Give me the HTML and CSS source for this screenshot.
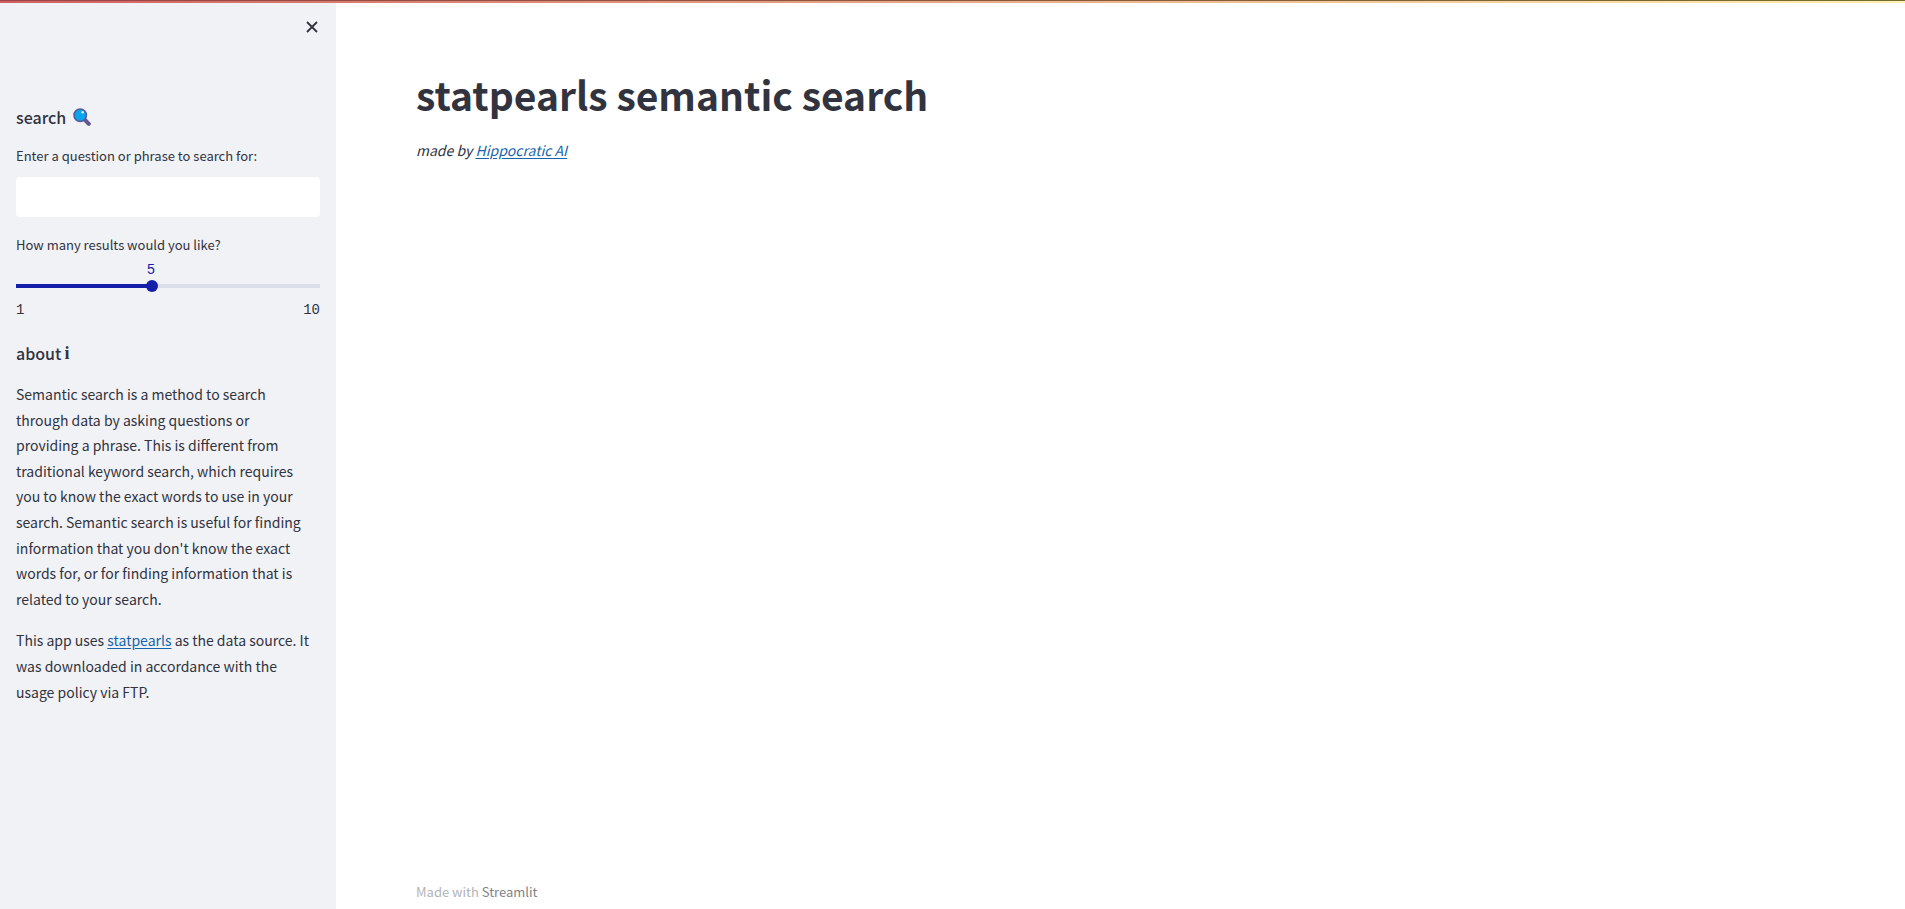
FILE: index.html
```
<!DOCTYPE html>
<html lang="en">
<head>
<meta charset="utf-8">
<meta name="viewport" content="width=device-width, initial-scale=1">
<title>statpearls semantic search</title>
<link rel="stylesheet" href="styles.css">
</head>
<body>
<div class="decoration"></div>
<div class="app">
  <aside class="sidebar">
    <button class="close" type="button" aria-label="Close sidebar">
      <svg viewBox="0 0 12 12" width="12" height="12" aria-hidden="true"><path d="M1 1 11 11M11 1 1 11" fill="none" stroke="currentColor" stroke-width="1.8"/></svg>
    </button>
    <h2 class="heading">search
      <svg class="lens" viewBox="0 0 18 18" width="18" height="18" aria-hidden="true">
        <path d="M11.5 11.5 15.8 15.8" stroke="#675593" stroke-width="4" stroke-linecap="round"/>
        <circle cx="7.2" cy="7.2" r="6.2" fill="#06a5ee" stroke="#50609d" stroke-width="1.6"/>
        <circle cx="9.7" cy="4.3" r="1.2" fill="#e8f7ff"/>
      </svg>
    </h2>
    <label class="label" for="query">Enter a question or phrase to search for:</label>
    <input class="query" id="query" type="text">
    <label class="label" for="count">How many results would you like?</label>
    <output class="value" for="count">5</output>
    <input class="slider" id="count" type="range" min="1" max="10" value="5">
    <div class="ticks"><span>1</span><span>10</span></div>
    <h2 class="heading heading-about">about <span class="info">i</span></h2>
    <p class="text">Semantic search is a method to search through data by asking questions or providing a phrase. This is different from traditional keyword search, which requires you to know the exact words to use in your search. Semantic search is useful for finding information that you don't know the exact words for, or for finding information that is related to your search.</p>
    <p class="text">This app uses <a href="#statpearls">statpearls</a> as the data source. It was downloaded in accordance with the usage policy via FTP.</p>
  </aside>
  <div class="page">
    <main>
      <h1 class="title">statpearls semantic search</h1>
      <p class="byline">made by <a href="#hippocratic">Hippocratic AI</a></p>
    </main>
    <footer class="footer">Made with <a href="#streamlit">Streamlit</a></footer>
  </div>
</div>
</body>
</html>
```
FILE: styles.css
```
* { box-sizing: border-box; }
body {
  margin: 0;
  font-family: "Source Sans Pro", "Noto Sans CJK SC", sans-serif;
  font-size: 16px;
  line-height: 160%;
  color: #31333f;
  background: #fff;
}
a { color: #1664ab; text-underline-offset: 2px; }
.decoration {
  position: fixed;
  inset: 0 0 auto;
  z-index: 2;
  height: 3px;
  background:
    linear-gradient(90deg, #9c4548, #766c30) top / 100% 1px no-repeat,
    linear-gradient(90deg, #d0605f, #fff1b0);
}
.app { display: flex; min-height: 100vh; }
.sidebar {
  display: flex;
  flex-direction: column;
  flex: 0 0 336px;
  padding: 16px;
  background: #f0f2f6;
}
.close {
  align-self: flex-end;
  display: flex;
  align-items: center;
  justify-content: center;
  width: 16px;
  height: 22px;
  margin-bottom: 64px;
  padding: 0;
  border: 0;
  background: none;
  color: #31333f;
}
.heading {
  display: flex;
  align-items: center;
  gap: 7px;
  margin: 0 0 14px;
  font-size: 16px;
  font-weight: 500;
  line-height: 30px;
}
.heading-about { gap: 3px; }
.info { font-family: "Liberation Serif", serif; font-weight: 700; font-size: 18px; }
.label { font-size: 13px; line-height: 20px; }
.query {
  width: 100%;
  height: 40px;
  margin: 11px 0 18px;
  padding: 8px;
  border: 0;
  border-radius: 4px;
  background: #fff;
  font: inherit;
}
.value, .ticks {
  font-family: "Liberation Mono", monospace;
  font-size: 14px;
  line-height: 20px;
}
.value {
  display: flex;
  justify-content: center;
  width: 270px;
  margin-top: 5px;
  color: #131fa8;
}
.slider {
  appearance: none;
  width: 100%;
  height: 12px;
  margin: 0;
  background: linear-gradient(90deg, #131fa8 44%, #d9dee8 44%) center / 100% 4px no-repeat;
  border-radius: 4px;
}
.slider::-webkit-slider-thumb {
  appearance: none;
  width: 12px;
  height: 12px;
  border-radius: 50%;
  background: #131fa8;
}
.ticks { display: flex; justify-content: space-between; margin: 8px 0 18px; }
.text { margin: 0 0 16px; padding-right: 8px; font-size: 14px; }
.page {
  display: flex;
  flex: 1;
  flex-direction: column;
  justify-content: space-between;
  padding: 68px 80px 4px;
}
.title { margin: 0 0 18px; font-size: 39px; line-height: 52px; font-weight: 700; }
.byline { margin: 0; font-size: 14px; font-style: italic; }
.footer { font-size: 13px; color: #b3b4b8; }
.footer a { color: #808289; text-decoration: none; }
```
